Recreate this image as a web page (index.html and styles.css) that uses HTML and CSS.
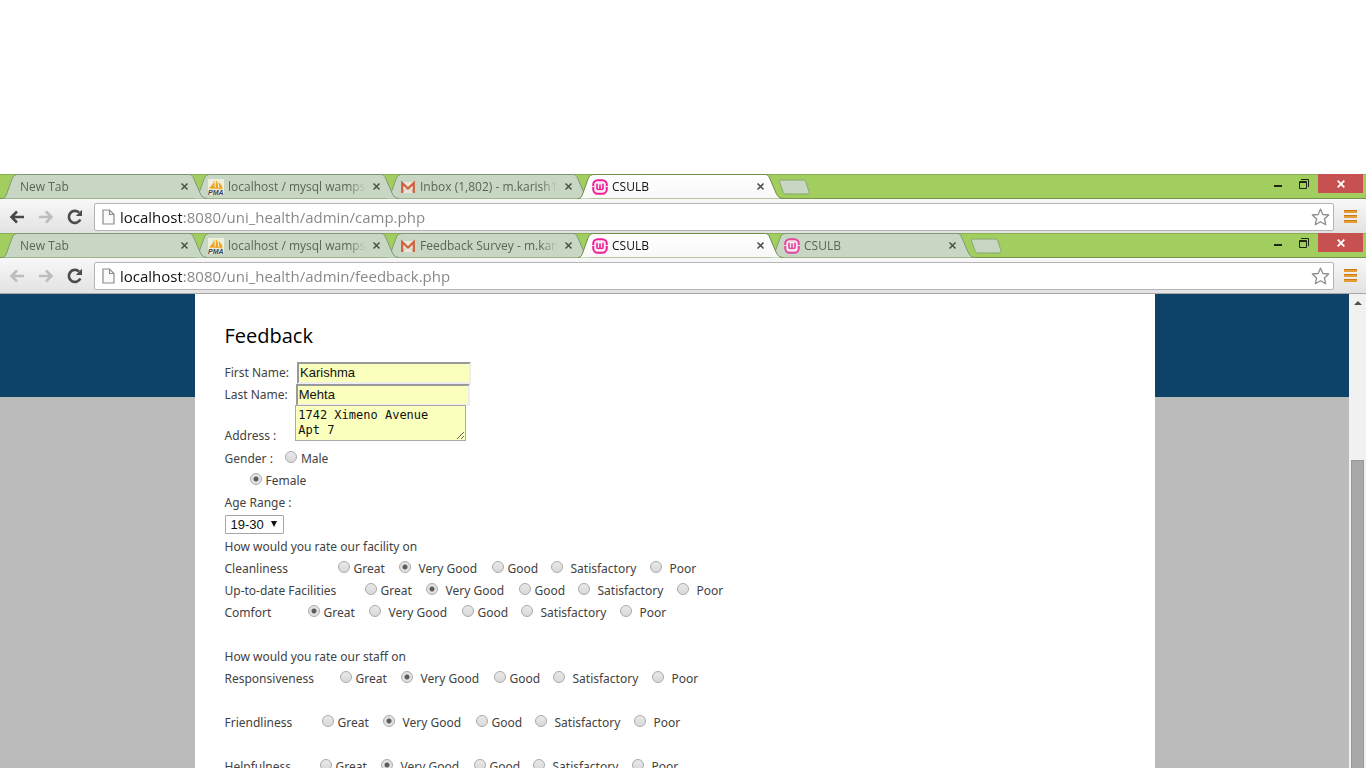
FILE: index.html
```html
<!DOCTYPE html>
<html lang="en">
<head>
<meta charset="utf-8">
<title>CSULB</title>
<link rel="stylesheet" href="styles.css">
</head>
<body>
<svg class="defs" aria-hidden="true">
  <linearGradient id="active-fill" x1="0" y1="0" x2="0" y2="1"><stop offset="0" stop-color="#fff"/><stop offset="1" stop-color="#f8f8f8"/></linearGradient>
  <linearGradient id="sail" x1="0" y1="0" x2="0" y2="1"><stop offset="0" stop-color="#f0b23c"/><stop offset="1" stop-color="#f29a10"/></linearGradient>
  <symbol id="tab-shape" viewBox="0 0 206 25"><path d="M0 24.5C3 24.5 4 22 5 19L10 5C11 2 13 .5 16 .5H187C190 .5 191 2 192 5L198 19C199.500 22 201 24.500 205 24.500"/></symbol>
  <symbol id="new-shape" viewBox="0 0 32 16"><path d="M3 1H25C27 1 27.500 2 28 3.500L31 12.500C31.500 14 31 15 29 15H8C6 15 5.500 14 5 12.500L1.500 3C1 1.500 1.500 1 3 1Z"/></symbol>
  <symbol id="close" viewBox="0 0 9 9"><path d="M1.500 1.500L7.500 7.500M7.500 1.500L1.500 7.500" stroke="#4d524b" stroke-width="1.600"/></symbol>
  <symbol id="pma" viewBox="0 0 16 16"><path fill="#edf0dc" d="M0 0H16V16H0Z"/><path fill="url(#sail)" d="M6.500 1V9H1.500C3.500 7 5.500 4 6.500 1ZM8 1C10 3 10.500 7 10 9H7.500ZM10.500 3C13 5 14.500 7.500 14.500 9.500H11.500Z"/><path fill="#eeaa33" d="M1 9.500C6 8.500 11 8.700 15 10L14 10.600C10 9.600 5 9.500 1 10Z"/><text x="0" y="16" font-family="Liberation Sans" font-weight="700" font-style="italic" font-size="7" fill="#39415a">PMA</text></symbol>
  <symbol id="gmail" viewBox="0 0 16 16"><path fill="#e9e5da" d="M2 3H14V14H2Z"/><path fill="none" stroke="#c8c5b8" d="M3 13.500L7 8.500M13 13.500L9 8.500"/><path fill="none" stroke="#d0603c" stroke-width="2.200" d="M2.200 14V4L8 9.500L13.800 4V14"/></symbol>
  <symbol id="wamp" viewBox="0 0 16 16"><rect x="1.200" y="1.200" width="13.600" height="13.600" rx="4.500" fill="#fdeaf5" stroke="#ec2198" stroke-width="2"/><path d="M0 7.500H2.500M13.500 7.500H16" stroke="#fbd3e9" stroke-width="1.200"/><path d="M5 4.800V9.200Q5 10.500 6.500 10.500T8 9.200V5.500V9.200Q8 10.500 9.500 10.500T11 9.200V4.800" fill="none" stroke="#ec2198" stroke-width="1.600"/></symbol>
  <symbol id="arrow" viewBox="0 0 16 14"><path d="M15 7H2.500M8 1.500L2.500 7L8 12.500" fill="none" stroke="currentColor" stroke-width="2.600"/></symbol>
  <symbol id="reload" viewBox="0 0 16 16"><path d="M13.300 10.500A6 6 0 1 1 12 3.600" fill="none" stroke="#4c4c4c" stroke-width="2.700"/><path d="M15 .800V7H8.800Z" fill="#4c4c4c"/></symbol>
  <symbol id="file" viewBox="0 0 13 16"><path d="M1 1H7.500L12 5.500V15H1ZM7.500 1V5.500H12" fill="#fafafa" stroke="#8b8b8b" stroke-width="1.200"/></symbol>
  <symbol id="star" viewBox="0 0 19 18"><path d="M9.500 1.200L11.900 6.500L17.700 7L13.400 11L14.700 16.700L9.500 13.700L4.300 16.700L5.600 11L1.300 7L7.100 6.500Z" fill="none" stroke="#8d8d8d" stroke-width="1.300" stroke-linejoin="round"/></symbol>
  <symbol id="menu" viewBox="0 0 13 13"><path d="M0 1.500H13M0 6.500H13M0 11.500H13" stroke="#e69c38" stroke-width="3"/><path d="M0 .500H13M0 5.500H13M0 10.500H13" stroke="#cd7b18"/></symbol>
  <symbol id="restore" viewBox="0 0 10 10"><path d="M.500 2.500H7.500V9.500H.500ZM0 3.500H8M2 .500H9.500V8" fill="none" stroke="#1d2712"/></symbol>
  <symbol id="win-close" viewBox="0 0 8 8"><path d="M.700 .700L7.300 7.300M7.300 .700L.700 7.300" stroke="#fff" stroke-width="1.800"/></symbol>
</svg>

<header class="browser">
  <div class="strip">
    <div class="tabs">
      <div class="tab"><svg class="shape"><use href="#tab-shape"/></svg><span class="title plain">New Tab</span><button class="x" aria-label="Close tab"><svg><use href="#close"/></svg></button></div>
      <div class="tab"><svg class="shape"><use href="#tab-shape"/></svg><svg class="fav"><use href="#pma"/></svg><span class="title">localhost / mysql wampserver</span><button class="x" aria-label="Close tab"><svg><use href="#close"/></svg></button></div>
      <div class="tab"><svg class="shape"><use href="#tab-shape"/></svg><svg class="fav"><use href="#gmail"/></svg><span class="title">Inbox (1,802) - m.karish140</span><button class="x" aria-label="Close tab"><svg><use href="#close"/></svg></button></div>
      <div class="tab active"><svg class="shape"><use href="#tab-shape"/></svg><svg class="fav"><use href="#wamp"/></svg><span class="title">CSULB</span><button class="x" aria-label="Close tab"><svg><use href="#close"/></svg></button></div>
      <button class="new" aria-label="New tab"><svg><use href="#new-shape"/></svg></button>
    </div>
    <div class="controls">
      <button class="min" aria-label="Minimize"><i></i></button>
      <button class="res" aria-label="Restore"><svg><use href="#restore"/></svg></button>
      <button class="quit" aria-label="Close window"><svg><use href="#win-close"/></svg></button>
    </div>
  </div>
  <div class="toolbar">
    <button class="nav on" aria-label="Back"><svg><use href="#arrow"/></svg></button>
    <button class="nav forward" aria-label="Forward"><svg><use href="#arrow"/></svg></button>
    <button class="nav" aria-label="Reload"><svg class="reload"><use href="#reload"/></svg></button>
    <div class="omnibox"><svg class="file"><use href="#file"/></svg><input class="url" aria-label="Address bar" value="localhost:8080/uni_health/admin/camp.php"><button aria-label="Bookmark"><svg class="star"><use href="#star"/></svg></button></div>
    <button class="menu" aria-label="Menu"><svg><use href="#menu"/></svg></button>
  </div>
</header>

<header class="browser last">
  <div class="strip">
    <div class="tabs">
      <div class="tab"><svg class="shape"><use href="#tab-shape"/></svg><span class="title plain">New Tab</span><button class="x" aria-label="Close tab"><svg><use href="#close"/></svg></button></div>
      <div class="tab"><svg class="shape"><use href="#tab-shape"/></svg><svg class="fav"><use href="#pma"/></svg><span class="title">localhost / mysql wampserver</span><button class="x" aria-label="Close tab"><svg><use href="#close"/></svg></button></div>
      <div class="tab"><svg class="shape"><use href="#tab-shape"/></svg><svg class="fav"><use href="#gmail"/></svg><span class="title">Feedback Survey - m.karish</span><button class="x" aria-label="Close tab"><svg><use href="#close"/></svg></button></div>
      <div class="tab active"><svg class="shape"><use href="#tab-shape"/></svg><svg class="fav"><use href="#wamp"/></svg><span class="title">CSULB</span><button class="x" aria-label="Close tab"><svg><use href="#close"/></svg></button></div>
      <div class="tab"><svg class="shape"><use href="#tab-shape"/></svg><svg class="fav dim"><use href="#wamp"/></svg><span class="title">CSULB</span><button class="x" aria-label="Close tab"><svg><use href="#close"/></svg></button></div>
      <button class="new" aria-label="New tab"><svg><use href="#new-shape"/></svg></button>
    </div>
    <div class="controls">
      <button class="min" aria-label="Minimize"><i></i></button>
      <button class="res" aria-label="Restore"><svg><use href="#restore"/></svg></button>
      <button class="quit" aria-label="Close window"><svg><use href="#win-close"/></svg></button>
    </div>
  </div>
  <div class="toolbar">
    <button class="nav" aria-label="Back"><svg><use href="#arrow"/></svg></button>
    <button class="nav forward" aria-label="Forward"><svg><use href="#arrow"/></svg></button>
    <button class="nav" aria-label="Reload"><svg class="reload"><use href="#reload"/></svg></button>
    <div class="omnibox"><svg class="file"><use href="#file"/></svg><input class="url" aria-label="Address bar" value="localhost:8080/uni_health/admin/feedback.php"><button aria-label="Bookmark"><svg class="star"><use href="#star"/></svg></button></div>
    <button class="menu" aria-label="Menu"><svg><use href="#menu"/></svg></button>
  </div>
</header>

<div class="viewport">
  <main class="page">
    <form class="card">
      <h1>Feedback</h1>
      <div class="row"><label for="first">First Name:</label><input class="field" id="first" value="Karishma"></div>
      <div class="row"><label for="last">Last Name:</label><input class="field" id="last" value="Mehta"></div>
      <div class="row address"><label for="addr">Address :</label><textarea id="addr" rows="2">1742 Ximeno Avenue
Apt 7</textarea></div>
      <div class="row gender"><span>Gender :</span><label class="opt"><input type="radio" name="gender">Male</label></div>
      <div class="row female"><label class="opt"><input type="radio" name="gender" checked>Female</label></div>
      <div class="row"><label for="age">Age Range :</label></div>
      <div class="row"><span class="select"><select id="age"><option>19-30</option></select></span></div>
      <div class="row">How would you rate our facility on</div>
      <div class="row rate clean"><span>Cleanliness</span><label class="opt"><input type="radio" name="clean">Great</label><label class="opt wide"><input type="radio" name="clean" checked>Very Good</label><label class="opt"><input type="radio" name="clean">Good</label><label class="opt wide"><input type="radio" name="clean">Satisfactory</label><label class="opt wide"><input type="radio" name="clean">Poor</label></div>
      <div class="row rate facilities"><span>Up-to-date Facilities</span><label class="opt"><input type="radio" name="fac">Great</label><label class="opt wide"><input type="radio" name="fac" checked>Very Good</label><label class="opt"><input type="radio" name="fac">Good</label><label class="opt wide"><input type="radio" name="fac">Satisfactory</label><label class="opt wide"><input type="radio" name="fac">Poor</label></div>
      <div class="row rate comfort"><span>Comfort</span><label class="opt"><input type="radio" name="comfort" checked>Great</label><label class="opt wide"><input type="radio" name="comfort">Very Good</label><label class="opt"><input type="radio" name="comfort">Good</label><label class="opt wide"><input type="radio" name="comfort">Satisfactory</label><label class="opt wide"><input type="radio" name="comfort">Poor</label></div>
      <div class="row spaced">How would you rate our staff on</div>
      <div class="row rate responsive"><span>Responsiveness</span><label class="opt"><input type="radio" name="resp">Great</label><label class="opt wide"><input type="radio" name="resp" checked>Very Good</label><label class="opt"><input type="radio" name="resp">Good</label><label class="opt wide"><input type="radio" name="resp">Satisfactory</label><label class="opt wide"><input type="radio" name="resp">Poor</label></div>
      <div class="row rate friendly spaced"><span>Friendliness</span><label class="opt"><input type="radio" name="friend">Great</label><label class="opt wide"><input type="radio" name="friend" checked>Very Good</label><label class="opt"><input type="radio" name="friend">Good</label><label class="opt wide"><input type="radio" name="friend">Satisfactory</label><label class="opt wide"><input type="radio" name="friend">Poor</label></div>
      <div class="row rate helpful spaced"><span>Helpfulness</span><label class="opt"><input type="radio" name="help">Great</label><label class="opt wide"><input type="radio" name="help" checked>Very Good</label><label class="opt"><input type="radio" name="help">Good</label><label class="opt wide"><input type="radio" name="help">Satisfactory</label><label class="opt wide"><input type="radio" name="help">Poor</label></div>
    </form>
  </main>
  <div class="scrollbar"><span class="up"></span><span class="thumb"></span></div>
</div>
</body>
</html>
```
FILE: styles.css
```css
* { box-sizing: border-box; }
html, body { height: 100%; }
body {
  margin: 0;
  padding-top: 174px;
  display: flex;
  flex-direction: column;
  overflow: hidden;
  background: #fff;
  font-family: "Noto Sans", "Open Sans", sans-serif;
}
button { border: 0; padding: 0; background: none; display: flex; align-items: center; justify-content: center; }
svg { display: block; flex: none; }
.defs { position: absolute; width: 0; height: 0; }

/* Browser frame */
.browser { flex: none; font-family: "Open Sans", "Noto Sans", sans-serif; }
.strip {
  display: flex;
  justify-content: space-between;
  height: 25px;
  background: #a2ce60;
  border-top: 1px solid #8bb054;
  border-bottom: 1px solid #74944a;
}
.tabs { display: flex; padding-left: 2px; margin-top: -1px; height: 25px; isolation: isolate; }
.tab { position: relative; display: flex; align-items: center; width: 192px; height: 25px; padding: 0 2px 0 14px; color: #5a6656; }
.tab:nth-child(1) { z-index: 5; }
.tab:nth-child(2) { z-index: 4; }
.tab:nth-child(3) { z-index: 3; }
.tab:nth-child(5) { z-index: 1; }
.tab.active { z-index: 6; color: #111; }
.shape { position: absolute; left: 0; top: 0; width: 206px; height: 25px; fill: #c8d7c4; stroke: #7f9a72; z-index: -1; }
.active .shape { fill: url(#active-fill); stroke: #6f8d4c; }
.fav { width: 16px; height: 16px; margin-right: 4px; }
.dim { opacity: .8; }
.title { flex: 1; font-size: 12px; line-height: 24px; white-space: nowrap; overflow: hidden; margin-right: 2px; -webkit-mask-image: linear-gradient(to left, transparent, #000 18px); mask-image: linear-gradient(to left, transparent, #000 18px); }
.plain { padding-left: 4px; }
.x { width: 16px; height: 16px; }
.x svg { width: 9px; height: 9px; }
.new { width: 32px; margin-left: 8px; }
.new svg { width: 32px; height: 16px; fill: #c8d7c4; stroke: #87a66b; }
.controls { display: flex; padding-right: 3px; margin-top: -1px; height: 19px; }
.min { width: 27px; }
.min i { width: 8px; height: 2px; background: #1d2712; margin-top: 5px; }
.res { width: 26px; margin-right: 1px; }
.res svg { width: 10px; height: 10px; }
.quit { width: 45px; background: #c75050; }
.quit svg { width: 8px; height: 8px; }

.toolbar {
  display: flex;
  align-items: center;
  height: 34px;
  padding: 1px 8px 0 2px;
  background: linear-gradient(#f8f8f8, #e2e2e2);
}
.last .toolbar { height: 36px; padding-bottom: 1px; border-bottom: 1px solid #a9a9a9; }
.nav { width: 29px; color: #bdbdbd; }
.nav.on { color: #484848; }
.nav svg { width: 16px; height: 14px; }
.nav .reload { width: 16px; height: 16px; }
.forward svg { transform: scaleX(-1); }
.omnibox {
  flex: 1;
  display: flex;
  align-items: center;
  height: 28px;
  margin-left: 5px;
  padding: 0 3px 0 7px;
  border: 1px solid #b4b4b4;
  border-radius: 2px;
  background: #fff;
}
.file { width: 13px; height: 16px; }
.url {
  flex: 1;
  min-width: 0;
  height: 26px;
  margin-left: 5px;
  padding: 0;
  border: 0;
  outline: 0;
  font: 15px/26px "Open Sans", "Noto Sans", sans-serif;
  color: #858585;
  background: linear-gradient(to right, #111 62px, #858585 62px);
  -webkit-background-clip: text;
  background-clip: text;
  -webkit-text-fill-color: transparent;
}
.star { width: 19px; height: 18px; }
.menu { width: 13px; margin: 0 1px 0 10px; }
.menu svg { width: 13px; height: 13px; }

/* Page */
.viewport { flex: 1; min-height: 0; display: flex; overflow: hidden; }
.page {
  flex: 1;
  display: flex;
  justify-content: center;
  background: linear-gradient(#0e4368 103px, #bbb 103px);
}
.card {
  width: 960px;
  padding: 26px 30px;
  background: #fff;
  color: #424242;
  font-size: 12px;
  line-height: 24px;
}
h1 { margin: 0 0 9px; font: 400 20px/32px "Open Sans", "Noto Sans", sans-serif; color: #000; }
.row { display: flex; align-items: baseline; height: 22px; white-space: nowrap; }
.spaced { margin-top: 22px; }
.field {
  width: 174px;
  height: 22px;
  margin-left: 8px;
  padding: 0 1px;
  border: 2px solid;
  border-color: #999 #eee #eee #999;
  background: #faffbd;
  font: 13px/18px "Liberation Sans", Arial, sans-serif;
  color: #111;
}
.address { height: 42px; align-items: flex-end; }
textarea {
  width: 171px;
  height: 36px;
  margin: 0 0 6px 19px;
  padding: 2px;
  border: 1px solid #a9a9a9;
  background: #faffbd;
  font: 12px/15px "DejaVu Sans Mono", monospace;
  color: #111;
  overflow: hidden;
}
.address label { line-height: 22px; }
.gender { gap: 12px; }
.female { padding-left: 25px; }
.opt { display: flex; align-items: baseline; gap: 4px; }
.wide { gap: 8px; }
input[type="radio"] {
  appearance: none;
  width: 12px;
  height: 12px;
  margin: 0 0 1px;
  border: 1px solid #aaa;
  border-radius: 50%;
  background: linear-gradient(#e9e9e9, #d9d9d9);
}
input[type="radio"]:checked { background: radial-gradient(circle, #5c5c5c 0 2px, #e2e2e2 3px); }
.select { position: relative; display: flex; align-self: center; }
.select::after { content: ""; position: absolute; right: 7px; top: 6px; border: 3px solid transparent; border-top: 6px solid #111; border-bottom: 0; }
select {
  appearance: none;
  width: 59px;
  height: 19px;
  padding: 0 5px;
  border: 1px solid #a6a6a6;
  border-radius: 1px;
  background: #fff;
  font: 13px/17px "Liberation Sans", Arial, sans-serif;
  color: #111;
}
.rate { display: grid; grid-template-columns: var(--label) 61px 93px 59px 99px auto; justify-content: start; }
.clean { --label: 113px; }
.facilities { --label: 140px; }
.comfort { --label: 83px; }
.responsive { --label: 115px; }
.friendly { --label: 97px; }
.helpful { --label: 95px; }

.scrollbar { width: 17px; display: flex; flex-direction: column; align-items: center; background: #f1f1f1; }
.up { margin-top: 7px; border: 4px solid transparent; border-top: 0; border-bottom: 4px solid #505050; }
.thumb { flex: 1; width: 13px; margin-top: 155px; background: #a8a8aa; border: 1px solid #989898; border-bottom: 0; }
```
